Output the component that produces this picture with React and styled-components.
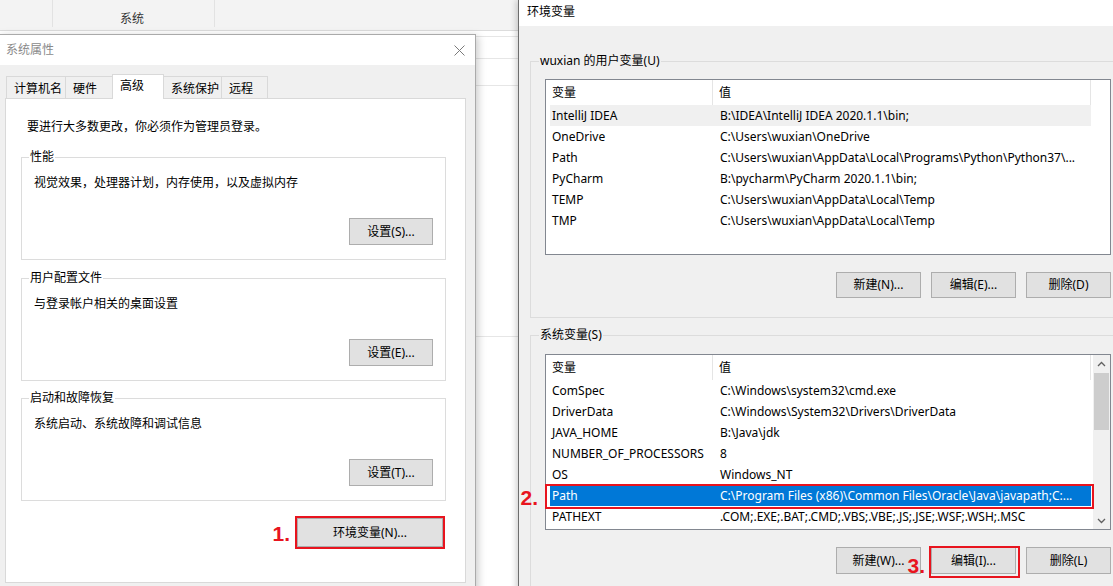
import React from "react";
import styled, { createGlobalStyle } from "styled-components";

const GlobalStyle = createGlobalStyle`
  html, body { margin: 0; padding: 0; background: #fff; overflow: hidden; }
  body {
    font-family: "Noto Sans", "Noto Sans CJK SC", sans-serif;
    font-size: 12px;
    color: #000;
  }
  * { box-sizing: border-box; }
`;

const RED = "#e8141e";

const Desktop = styled.div`
  position: relative;
  width: 1113px;
  height: 586px;
  overflow: hidden;
  background: #fff;
`;

/* window behind the dialogs */
const BgHeader = styled.div`
  display: flex;
  height: 31px;
  background: #f3f3f3;
  border-bottom: 1px solid #dcdcdc;
`;
const BgCol = styled.div`
  width: ${(p) => p.w}px;
  height: 27px;
  border-right: 1px solid #e2e2e2;
  display: flex;
  justify-content: center;
  padding: 11px 3px 0 0;
  line-height: 16px;
  color: #333;
`;
const BgRow = styled.div`
  height: ${(p) => p.h}px;
  border-bottom: 1px solid #e6e6e6;
`;

/* shared */
const Button = styled.button`
  font: inherit;
  width: ${(p) => p.w}px;
  height: ${(p) => p.h}px;
  padding: 0;
  background: #e1e1e1;
  border: 1px solid #adadad;
  color: #000;
  line-height: 16px;
`;

const Mark = styled.div`
  position: relative;
  &::after {
    content: "";
    position: absolute;
    top: ${(p) => p.t}px;
    right: ${(p) => p.r}px;
    bottom: ${(p) => p.b}px;
    left: ${(p) => p.l}px;
    border: 2px solid ${RED};
    pointer-events: none;
    z-index: 2;
  }
`;
const Step = styled.span`
  position: absolute;
  right: calc(100% + ${(p) => p.gap}px);
  top: 50%;
  transform: translateY(-50%);
  margin-top: ${(p) => p.dy || 0}px;
  font: bold 21px "Liberation Sans", Arial, sans-serif;
  line-height: 1;
  color: ${RED};
  z-index: 3;
`;

/* 系统属性 dialog */
const SysDialog = styled.div`
  position: absolute;
  left: -1px;
  top: 34px;
  width: 477px;
  height: 560px;
  background: #f0f0f0;
  border: 1px solid #aaaaaa;
  box-shadow: 2px 2px 8px rgba(0, 0, 0, 0.22);
  display: flex;
  flex-direction: column;
`;
const SysTitleBar = styled.div`
  height: 30px;
  flex: none;
  background: #fff;
  display: flex;
  align-items: center;
  justify-content: space-between;
  padding: 0 10px 0 6px;
  color: #8a8a8a;
  line-height: 16px;
`;
const SysBody = styled.div`
  padding: 9px 0 0 5px;
`;
const TabStrip = styled.div`
  display: flex;
  align-items: flex-end;
  height: 24px;
  padding-left: 1px;
  position: relative;
  z-index: 1;
`;
const Tab = styled.div`
  width: ${(p) => p.w}px;
  height: ${(p) => (p.active ? 25 : 22)}px;
  margin-bottom: ${(p) => (p.active ? -1 : 0)}px;
  margin-left: ${(p) => (p.first ? 0 : -1)}px;
  background: ${(p) => (p.active ? "#fff" : "#f0f0f0")};
  border: 1px solid #d9d9d9;
  border-bottom: none;
  padding: ${(p) => (p.active ? 3 : 4)}px 0 0 7px;
  line-height: 16px;
  position: relative;
  z-index: ${(p) => (p.active ? 2 : 1)};
`;
const Panel = styled.div`
  width: 461px;
  height: 485px;
  background: #fff;
  border: 1px solid #d9d9d9;
  padding: 20px 19px 0 15px;
`;
const Intro = styled.div`
  padding-left: 6px;
  line-height: 16px;
`;
const Group = styled.fieldset`
  margin: ${(p) => p.mt}px 0 0 0;
  padding: 0;
  border: 1px solid #dcdcdc;
  min-width: 0;
  width: ${(p) => (p.w ? `${p.w}px` : "auto")};
`;
const Legend = styled.legend`
  margin-left: ${(p) => p.ml}px;
  padding: 0 1px;
  line-height: 16px;
`;
const GroupBody = styled.div`
  padding: ${(p) => p.pad};
`;
const Desc = styled.div`
  line-height: 16px;
`;
const ButtonRow = styled.div`
  display: flex;
  justify-content: flex-end;
  gap: ${(p) => p.gap || 0}px;
  margin-top: ${(p) => p.mt}px;
  padding-right: ${(p) => p.pr || 0}px;
`;

/* 环境变量 dialog */
const EnvDialog = styled.div`
  position: absolute;
  left: 518px;
  top: 0;
  width: 620px;
  height: 600px;
  background: #f0f0f0;
  border-left: 1px solid #6d6d6d;
  box-shadow: -2px 0 6px rgba(0, 0, 0, 0.18);
`;
const EnvTitleBar = styled.div`
  height: 26px;
  background: #fff;
  padding: 4px 0 0 8px;
  line-height: 16px;
`;
const EnvBody = styled.div`
  padding: 27px 0 0 11px;
`;
const ListBox = styled.div`
  height: 176px;
  background: #fff;
  border: 1px solid #828790;
  display: flex;
  padding-left: 4px;
`;
const Table = styled.div`
  width: 541px;
  flex: none;
`;
const HeadRow = styled.div`
  display: flex;
  height: 25px;
`;
const HeadCell = styled.div`
  width: ${(p) => (p.w ? `${p.w}px` : "auto")};
  flex: ${(p) => (p.w ? "none" : 1)};
  border-right: 1px solid #e5e5e5;
  padding-left: ${(p) => p.pl}px;
  line-height: 26px;
`;
const Row = styled.div`
  display: flex;
  height: 21px;
  line-height: 21px;
  background: ${(p) => (p.sel === "active" ? "#0078d7" : p.sel === "idle" ? "#f0f0f0" : "transparent")};
  color: ${(p) => (p.sel === "active" ? "#fff" : "#000")};
`;
const Cell = styled.div`
  width: ${(p) => (p.w ? `${p.w}px` : "auto")};
  flex: ${(p) => (p.w ? "none" : 1)};
  padding-left: ${(p) => p.pl}px;
  white-space: nowrap;
  overflow: hidden;
`;
const ScrollBar = styled.div`
  width: 17px;
  margin-left: auto;
  background: #f0f0f0;
  display: flex;
  flex-direction: column;
`;
const ScrollArrow = styled.div`
  height: 17px;
  display: flex;
  align-items: center;
  justify-content: center;
`;
const ScrollTrack = styled.div`
  flex: 1;
  padding: 1px 1px 0 1px;
`;
const Thumb = styled.div`
  height: 57px;
  background: #cdcdcd;
`;

const CloseIcon = () => (
  <svg width="11" height="11" viewBox="0 0 11 11">
    <path d="M0.5 0.5 L10.5 10.5 M10.5 0.5 L0.5 10.5" stroke="#7a7a7a" strokeWidth="1" fill="none" />
  </svg>
);

const Chevron = ({ up }) => (
  <svg width="9" height="6" viewBox="0 0 9 6">
    <path d={up ? "M1 5 L4.5 1.5 L8 5" : "M1 1 L4.5 4.5 L8 1"} stroke="#606060" strokeWidth="1.3" fill="none" />
  </svg>
);

const tabs = [
  { label: "计算机名", w: 60 },
  { label: "硬件", w: 48 },
  { label: "高级", w: 52, active: true },
  { label: "系统保护", w: 59 },
  { label: "远程", w: 47 },
];

const groups = [
  { title: "性能", desc: "视觉效果，处理器计划，内存使用，以及虚拟内存", btn: "设置(S)...", mt: 14 },
  { title: "用户配置文件", desc: "与登录帐户相关的桌面设置", btn: "设置(E)...", mt: 10 },
  { title: "启动和故障恢复", desc: "系统启动、系统故障和调试信息", btn: "设置(T)...", mt: 9 },
];

const userVars = [
  ["IntelliJ IDEA", String.raw`B:\IDEA\IntelliJ IDEA 2020.1.1\bin;`, "idle"],
  ["OneDrive", String.raw`C:\Users\wuxian\OneDrive`],
  ["Path", String.raw`C:\Users\wuxian\AppData\Local\Programs\Python\Python37\...`],
  ["PyCharm", String.raw`B:\pycharm\PyCharm 2020.1.1\bin;`],
  ["TEMP", String.raw`C:\Users\wuxian\AppData\Local\Temp`],
  ["TMP", String.raw`C:\Users\wuxian\AppData\Local\Temp`],
];

const sysVars = [
  ["ComSpec", String.raw`C:\Windows\system32\cmd.exe`],
  ["DriverData", String.raw`C:\Windows\System32\Drivers\DriverData`],
  ["JAVA_HOME", String.raw`B:\Java\jdk`],
  ["NUMBER_OF_PROCESSORS", "8"],
  ["OS", "Windows_NT"],
  ["Path", String.raw`C:\Program Files (x86)\Common Files\Oracle\Java\javapath;C:...`, "active"],
  ["PATHEXT", ".COM;.EXE;.BAT;.CMD;.VBS;.VBE;.JS;.JSE;.WSF;.WSH;.MSC"],
];

const VarRow = ({ name, value, sel }) => (
  <Row sel={sel}>
    <Cell w={163} pl={2}>{name}</Cell>
    <Cell pl={7}>{value}</Cell>
  </Row>
);

const VarList = ({ rows, scroll }) => (
  <ListBox>
    <Table>
      <HeadRow>
        <HeadCell w={163} pl={2}>变量</HeadCell>
        <HeadCell pl={6}>值</HeadCell>
      </HeadRow>
      {rows.map(([n, v, sel]) =>
        sel === "active" ? (
          <Mark key={n} t={-1} r={-3} b={-3} l={-5}>
            <Step gap={12} dy={1}>2.</Step>
            <VarRow name={n} value={v} sel={sel} />
          </Mark>
        ) : (
          <VarRow key={n} name={n} value={v} sel={sel} />
        )
      )}
    </Table>
    {scroll && (
      <ScrollBar>
        <ScrollArrow><Chevron up /></ScrollArrow>
        <ScrollTrack><Thumb /></ScrollTrack>
        <ScrollArrow><Chevron /></ScrollArrow>
      </ScrollBar>
    )}
  </ListBox>
);

export default function App() {
  return (
    <Desktop>
      <GlobalStyle />
      <BgHeader>
        <BgCol w={53} />
        <BgCol w={162}>系统</BgCol>
      </BgHeader>
      <BgRow h={6} />
      <BgRow h={22} />
      <BgRow h={27} />
      <BgRow h={251} />

      <SysDialog>
        <SysTitleBar>
          <span>系统属性</span>
          <CloseIcon />
        </SysTitleBar>
        <SysBody>
          <TabStrip>
            {tabs.map((t, i) => (
              <Tab key={t.label} w={t.w} active={t.active} first={i === 0}>{t.label}</Tab>
            ))}
          </TabStrip>
          <Panel>
            <Intro>要进行大多数更改，你必须作为管理员登录。</Intro>
            {groups.map((g) => (
              <Group key={g.title} mt={g.mt}>
                <Legend ml={7}>{g.title}</Legend>
                <GroupBody pad="10px 12px 14px 12px">
                  <Desc>{g.desc}</Desc>
                  <ButtonRow mt={27}>
                    <Button w={84} h={27}>{g.btn}</Button>
                  </ButtonRow>
                </GroupBody>
              </Group>
            ))}
            <ButtonRow mt={17} pr={3}>
              <Mark t={-2} r={-2} b={-2} l={-2}>
                <Step gap={7}>1.</Step>
                <Button w={146} h={29}>环境变量(N)...</Button>
              </Mark>
            </ButtonRow>
          </Panel>
        </SysBody>
      </SysDialog>

      <EnvDialog>
        <EnvTitleBar>环境变量</EnvTitleBar>
        <EnvBody>
          <Group mt={0} w={596}>
            <Legend ml={8}>wuxian 的用户变量(U)</Legend>
            <GroupBody pad="10px 14px 19px 14px">
              <VarList rows={userVars} />
              <ButtonRow mt={17} gap={10}>
                <Button w={85} h={26}>新建(N)...</Button>
                <Button w={85} h={26}>编辑(E)...</Button>
                <Button w={85} h={26}>删除(D)</Button>
              </ButtonRow>
            </GroupBody>
          </Group>
          <Group mt={9} w={596}>
            <Legend ml={8}>系统变量(S)</Legend>
            <GroupBody pad="11px 14px 17px 14px">
              <VarList rows={sysVars} scroll />
              <ButtonRow mt={17} gap={10}>
                <Button w={85} h={27}>新建(W)...</Button>
                <Mark t={-1} r={-4} b={-4} l={-2}>
                  <Step gap={6} dy={4}>3.</Step>
                  <Button w={85} h={27}>编辑(I)...</Button>
                </Mark>
                <Button w={85} h={27}>删除(L)</Button>
              </ButtonRow>
            </GroupBody>
          </Group>
        </EnvBody>
      </EnvDialog>
    </Desktop>
  );
}
